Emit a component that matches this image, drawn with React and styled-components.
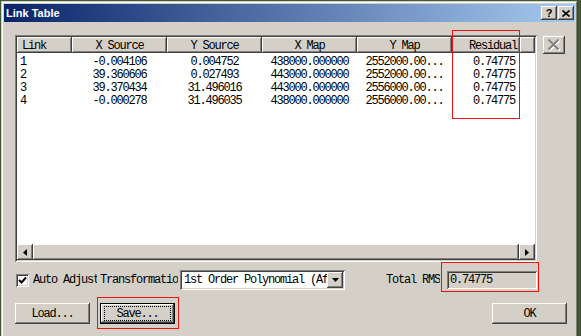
import React from 'react';
import styled, { createGlobalStyle, css } from 'styled-components';

const GlobalStyle = createGlobalStyle`
  html, body { margin: 0; padding: 0; }
  body {
    width: 581px;
    height: 336px;
    overflow: hidden;
    background: #3f5a33;
    font-family: "Liberation Mono", "Courier New", monospace;
    font-size: 12px;
    letter-spacing: -1.2px;
    color: #000;
  }
`;

// classic 3d edges
const raised = css`
  background: #d4d0c8;
  box-shadow: inset -1px -1px #404040, inset 1px 1px #ffffff,
    inset -2px -2px #808080, inset 2px 2px #d4d0c8;
`;
const sunken = css`
  box-shadow: inset 1px 1px #808080, inset -1px -1px #ffffff,
    inset 2px 2px #404040, inset -2px -2px #d4d0c8;
`;

const Page = styled.div`
  position: relative;
  width: 581px;
  height: 336px;
  overflow: hidden;
`;

const Frame = styled.div`
  margin: 1px 0 0 1px;
  width: 577px;
  height: 350px;
  box-sizing: border-box;
  padding: 3px;
  background: #d4d0c8;
  box-shadow: inset -1px -1px #404040, inset 1px 1px #d4d0c8,
    inset -2px -2px #808080, inset 2px 2px #ffffff;
`;

const Caption = styled.div`
  height: 18px;
  display: flex;
  align-items: center;
  padding: 0 1px 0 2px;
  background: linear-gradient(to right, #0a246a, #a6caf0);
`;

const CaptionTitle = styled.span`
  flex: 1;
  color: #fff;
  font: bold 11px "Liberation Sans", Arial, sans-serif;
  letter-spacing: 0;
`;

const CaptionButton = styled.div`
  width: 16px;
  height: 14px;
  margin-left: ${p => p.$gap || 0}px;
  display: flex;
  align-items: center;
  justify-content: center;
  ${raised};
  font: bold 11px "Liberation Sans", Arial, sans-serif;
  letter-spacing: 0;
  line-height: 14px;
`;

const Body = styled.div`
  padding: 13px 0 0 11px;
`;

const TopRow = styled.div`
  display: flex;
  align-items: flex-start;
  gap: 6px;
`;

const ListView = styled.div`
  width: 522px;
  height: 227px;
  box-sizing: border-box;
  padding: 2px;
  display: flex;
  flex-direction: column;
  background: #fff;
  ${sunken};
`;

const HeaderRow = styled.div`
  display: flex;
  height: 16px;
  flex-shrink: 0;
`;

const headEdge = css`
  background: #d4d0c8;
  box-shadow: inset -1px -1px #404040, inset 1px 1px #ffffff,
    inset -2px -2px #808080;
`;

const HeaderCell = styled.div`
  width: ${p => p.$w}px;
  box-sizing: border-box;
  ${headEdge};
  text-align: ${p => p.$align};
  padding: 1px ${p => (p.$align === 'right' ? 3 : 0)}px 0 ${p => (p.$align === 'left' ? 5 : 0)}px;
  line-height: 16px;
  white-space: nowrap;
  overflow: hidden;
`;

const HeaderFill = styled.div`
  flex: 1;
  ${headEdge};
`;

const Rows = styled.div`
  flex: 1;
  padding-top: 2px;
  background: #fff;
  overflow: hidden;
`;

const Row = styled.div`
  display: flex;
  height: 13px;
  line-height: 14px;
`;

const Cell = styled.div`
  width: ${p => p.$w}px;
  box-sizing: border-box;
  text-align: ${p => p.$align};
  padding: 0 ${p => (p.$align === 'right' ? 5 : 0)}px 0 ${p => (p.$align === 'left' ? 3 : 0)}px;
  white-space: nowrap;
  overflow: hidden;
`;

const ScrollBar = styled.div`
  display: flex;
  height: 16px;
  flex-shrink: 0;
  background: #d4d0c8;
`;

const ScrollArrow = styled.div`
  width: 16px;
  height: 16px;
  display: flex;
  align-items: center;
  justify-content: center;
  ${raised};
`;

const ScrollThumb = styled.div`
  flex: 1;
  ${raised};
`;

const SideButton = styled.div`
  width: 22px;
  height: 18px;
  margin-top: 1px;
  display: flex;
  align-items: center;
  justify-content: center;
  ${raised};
`;

const ControlsRow = styled.div`
  width: 522px;
  height: 20px;
  margin-top: 8px;
  display: flex;
  align-items: center;
  justify-content: space-between;
`;

const Group = styled.div`
  display: flex;
  align-items: center;
  gap: ${p => p.$gap || 0}px;
`;

const CheckBox = styled.div`
  width: 13px;
  height: 13px;
  margin: 0 4px 0 1px;
  box-sizing: border-box;
  background: #fff;
  display: flex;
  align-items: center;
  justify-content: center;
  ${sunken};
`;

const Label = styled.span`
  display: inline-block;
  width: ${p => (p.$w ? `${p.$w}px` : 'auto')};
  margin-right: ${p => p.$mr || 0}px;
  white-space: nowrap;
  overflow: hidden;
  line-height: 16px;
`;

const Combo = styled.div`
  width: 165px;
  height: 20px;
  box-sizing: border-box;
  padding: 2px;
  display: flex;
  align-items: center;
  background: #fff;
  ${sunken};
`;

const ComboText = styled.span`
  flex: 1;
  padding-left: 2px;
  white-space: nowrap;
  overflow: hidden;
  line-height: 16px;
`;

const ComboButton = styled.div`
  width: 16px;
  height: 16px;
  display: flex;
  align-items: center;
  justify-content: center;
  ${raised};
`;

const ReadField = styled.div`
  width: 90px;
  height: 18px;
  box-sizing: border-box;
  padding: 0 3px;
  line-height: 19px;
  background: #d4d0c8;
  ${sunken};
`;

const ButtonRow = styled.div`
  width: 552px;
  margin-top: 13px;
  display: flex;
  justify-content: space-between;
`;

const PushButton = styled.div`
  width: 75px;
  height: 21px;
  box-sizing: border-box;
  display: flex;
  align-items: center;
  justify-content: center;
  ${raised};
  ${p => p.$default && css`
    box-shadow: inset 0 0 0 1px #000, inset -2px -2px #404040, inset 2px 2px #ffffff,
      inset -3px -3px #808080;
  `}
`;

const FocusRect = styled.span`
  display: flex;
  align-items: center;
  justify-content: center;
  width: 65px;
  height: 13px;
  outline: 1px dotted #000;
  line-height: 14px;
`;

const Annotation = styled.div`
  position: absolute;
  box-sizing: border-box;
  border: 1px solid #ee1111;
  pointer-events: none;
`;

const columns = [
  { title: 'Link', w: 55, head: 'left', cell: 'left' },
  { title: 'X Source', w: 95, head: 'center', cell: 'center' },
  { title: 'Y Source', w: 95, head: 'center', cell: 'center' },
  { title: 'X Map', w: 95, head: 'center', cell: 'center' },
  { title: 'Y Map', w: 95, head: 'center', cell: 'center' },
  { title: 'Residual', w: 68, head: 'right', cell: 'right' },
];

const rows = [
  ['1', '-0.004106', '0.004752', '438000.000000', '2552000.00...', '0.74775'],
  ['2', '39.360606', '0.027493', '443000.000000', '2552000.00...', '0.74775'],
  ['3', '39.370434', '31.496016', '443000.000000', '2556000.00...', '0.74775'],
  ['4', '-0.000278', '31.496035', '438000.000000', '2556000.00...', '0.74775'],
];

const boxes = [
  { left: 452, top: 30, width: 68, height: 89 },
  { left: 441, top: 262, width: 98, height: 30 },
  { left: 97, top: 297, width: 82, height: 32 },
];

const App = () => {
  return (
    <Page>
      <GlobalStyle />
      <Frame>
        <Caption>
          <CaptionTitle>Link Table</CaptionTitle>
          <CaptionButton>?</CaptionButton>
          <CaptionButton $gap={1}>
            <svg width="8" height="7" viewBox="0 0 8 7">
              <path d="M0.5 0.5 L7.5 6.5 M7.5 0.5 L0.5 6.5" stroke="#000" strokeWidth="1.6" />
            </svg>
          </CaptionButton>
        </Caption>
        <Body>
          <TopRow>
            <ListView>
              <HeaderRow>
                {columns.map(c => (
                  <HeaderCell key={c.title} $w={c.w} $align={c.head}>{c.title}</HeaderCell>
                ))}
                <HeaderFill />
              </HeaderRow>
              <Rows>
                {rows.map(r => (
                  <Row key={r[0]}>
                    {r.map((v, i) => (
                      <Cell key={i} $w={columns[i].w} $align={columns[i].cell}>{v}</Cell>
                    ))}
                  </Row>
                ))}
              </Rows>
              <ScrollBar>
                <ScrollArrow>
                  <svg width="4" height="7" viewBox="0 0 4 7"><path d="M4 0 L0 3.5 L4 7 Z" fill="#000" /></svg>
                </ScrollArrow>
                <ScrollThumb />
                <ScrollArrow>
                  <svg width="4" height="7" viewBox="0 0 4 7"><path d="M0 0 L4 3.5 L0 7 Z" fill="#000" /></svg>
                </ScrollArrow>
              </ScrollBar>
            </ListView>
            <SideButton>
              <svg width="14" height="13" viewBox="0 0 14 13">
                <path d="M2.5 1.5 L12.5 11.5 M12.5 1.5 L2.5 11.5" stroke="#fff" strokeWidth="2" />
                <path d="M1.5 0.5 L11.5 10.5 M11.5 0.5 L1.5 10.5" stroke="#808080" strokeWidth="2" />
              </svg>
            </SideButton>
          </TopRow>
          <ControlsRow>
            <Group>
              <CheckBox>
                <svg width="9" height="9" viewBox="0 0 9 9">
                  <path d="M1 4 L3.5 6.5 L8 1.5" stroke="#000" strokeWidth="2" fill="none" />
                </svg>
              </CheckBox>
              <Label $w={64} $mr={3}>Auto Adjust</Label>
              <Label $w={78} $mr={2}>Transformation</Label>
              <Combo>
                <ComboText>1st Order Polynomial (Affine)</ComboText>
                <ComboButton>
                  <svg width="7" height="4" viewBox="0 0 7 4"><path d="M0 0 L7 0 L3.5 4 Z" fill="#000" /></svg>
                </ComboButton>
              </Combo>
            </Group>
            <Group $gap={7}>
              <Label>Total RMS</Label>
              <ReadField>0.74775</ReadField>
            </Group>
          </ControlsRow>
          <ButtonRow>
            <Group $gap={10}>
              <PushButton>Load...</PushButton>
              <PushButton $default>
                <FocusRect>Save...</FocusRect>
              </PushButton>
            </Group>
            <PushButton>OK</PushButton>
          </ButtonRow>
        </Body>
      </Frame>
      {boxes.map((b, i) => (
        <Annotation key={i} style={b} />
      ))}
    </Page>
  );
};

export default App;
